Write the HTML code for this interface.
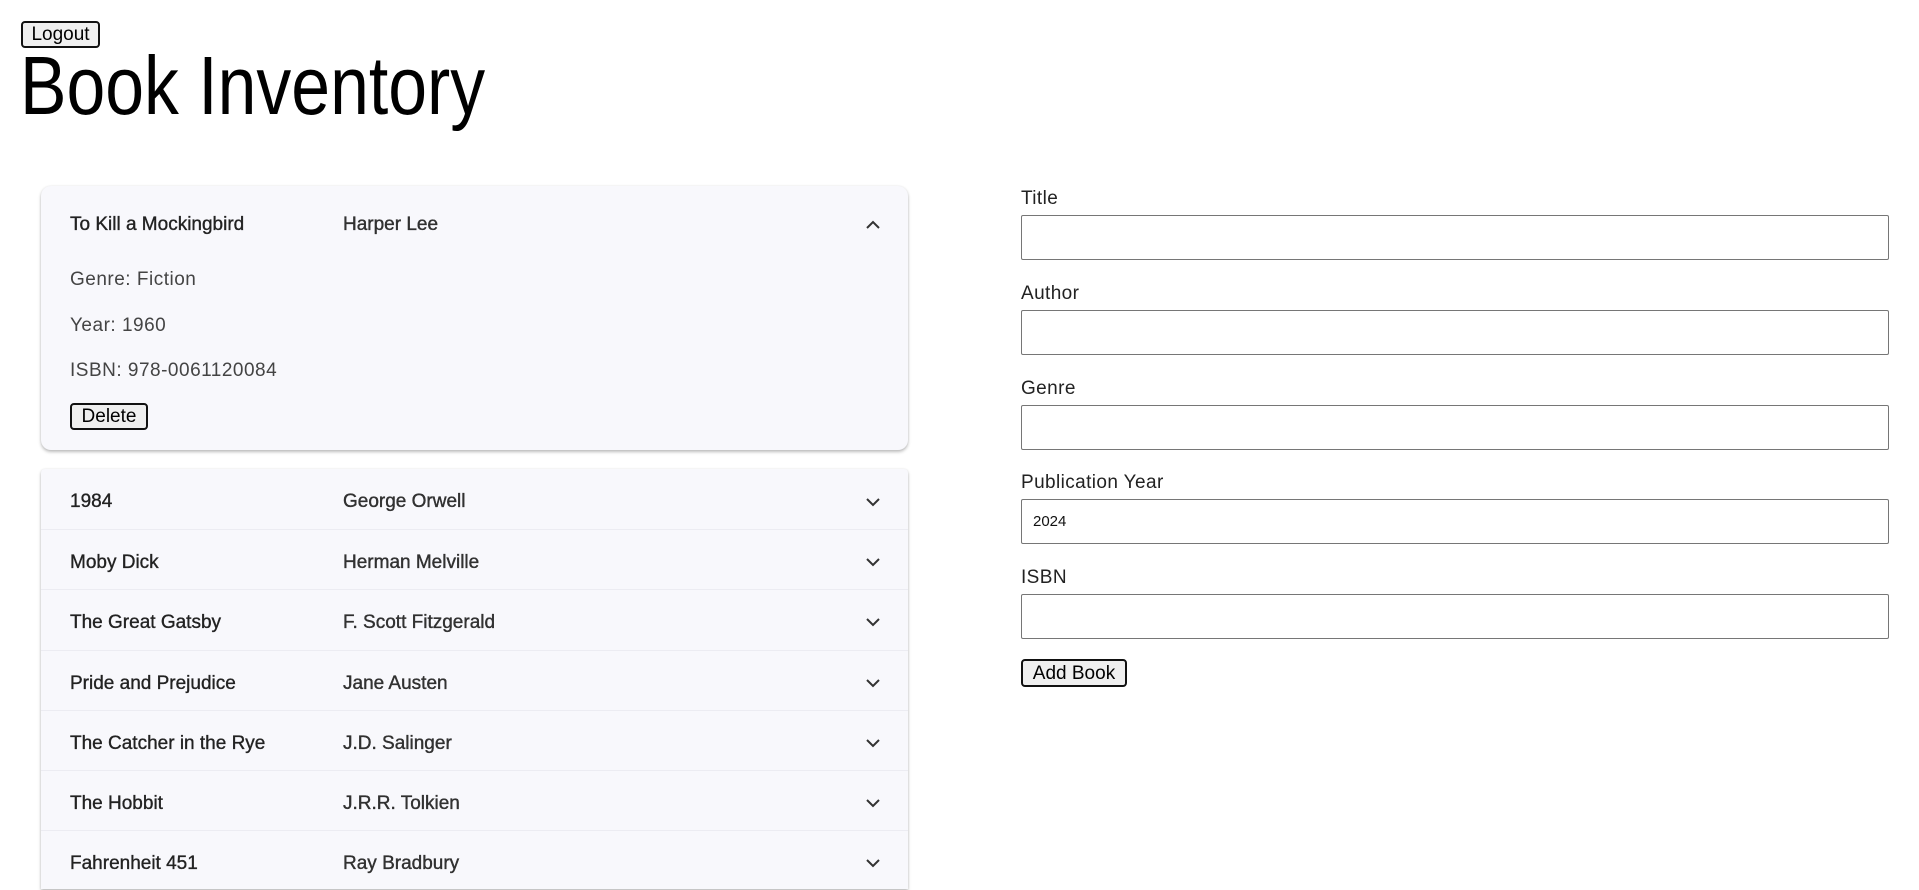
<!DOCTYPE html>
<html><head><meta charset="utf-8"><style>
body{margin:0;width:1919px;height:866px;overflow:hidden;background:#fff;font-family:"Liberation Sans",sans-serif;position:relative;color:#1f1f1f}
.btn{position:absolute;border:2px solid #111;border-radius:4px;background:#efefef;font-size:19px;line-height:1;display:flex;align-items:center;justify-content:center;box-sizing:border-box;color:#000}
h1{position:absolute;left:20px;top:44px;margin:0;font-weight:400;font-size:83px;line-height:1;transform:scaleX(.84);transform-origin:left;color:#000}
.card{position:absolute;left:41px;width:867px;background:#f8f8fc;box-shadow:0 2px 3px rgba(0,0,0,.25),0 0 2px rgba(0,0,0,.08);}
.t{position:absolute;font-size:19px;color:#222;transform:translateY(-50%);white-space:nowrap;-webkit-text-stroke:0.35px #222}
.d{position:absolute;font-size:19px;color:#444;transform:translateY(-50%);letter-spacing:.5px;white-space:nowrap}
.row{position:absolute;left:0;width:867px;height:60px;border-top:1px solid #ececf2;box-sizing:border-box}
.lbl{position:absolute;left:1021px;font-size:19px;color:#222;transform:translateY(-50%);letter-spacing:.4px}
.in{position:absolute;left:1021px;width:868px;height:45px;border:1px solid #767676;border-radius:2px;box-sizing:border-box;font-size:15px;padding-left:11px;line-height:43px;color:#111}
svg.ch{position:absolute;left:863px;width:20px;height:20px;transform:translateY(-50%)}
</style></head><body>
<div class="btn" style="left:21px;top:21px;width:79px;height:27px">Logout</div>
<h1>Book Inventory</h1>

<div class="card" style="top:186px;height:264px;border-radius:10px">
  <div class="t" style="left:29px;top:39px">To Kill a Mockingbird</div>
  <div class="t" style="left:302px;top:39px;color:#333">Harper Lee</div>
  <svg class="ch" style="left:822px;top:39px" viewBox="0 0 20 20"><polyline points="4,13 10,7 16,13" fill="none" stroke="#333" stroke-width="2"/></svg>
  <div class="d" style="left:29px;top:94px">Genre: Fiction</div>
  <div class="d" style="left:29px;top:140px">Year: 1960</div>
  <div class="d" style="left:29px;top:185px">ISBN: 978-0061120084</div>
  <div class="btn" style="left:29px;top:217px;width:78px;height:27px">Delete</div>
</div>

<div class="card" style="top:469px;height:420px;border-radius:4px 4px 0 0">
  <div class="row" style="top:0;border-top:none"><div class="t" style="left:29px;top:33px">1984</div><div class="t" style="left:302px;top:33px;color:#333">George Orwell</div></div>
  <div class="row" style="top:60px"><div class="t" style="left:29px;top:33px">Moby Dick</div><div class="t" style="left:302px;top:33px;color:#333">Herman Melville</div></div>
  <div class="row" style="top:120px"><div class="t" style="left:29px;top:33px">The Great Gatsby</div><div class="t" style="left:302px;top:33px;color:#333">F. Scott Fitzgerald</div></div>
  <div class="row" style="top:181px"><div class="t" style="left:29px;top:33px">Pride and Prejudice</div><div class="t" style="left:302px;top:33px;color:#333">Jane Austen</div></div>
  <div class="row" style="top:241px"><div class="t" style="left:29px;top:33px">The Catcher in the Rye</div><div class="t" style="left:302px;top:33px;color:#333">J.D. Salinger</div></div>
  <div class="row" style="top:301px"><div class="t" style="left:29px;top:33px">The Hobbit</div><div class="t" style="left:302px;top:33px;color:#333">J.R.R. Tolkien</div></div>
  <div class="row" style="top:361px"><div class="t" style="left:29px;top:33px">Fahrenheit 451</div><div class="t" style="left:302px;top:33px;color:#333">Ray Bradbury</div></div>
</div>
<svg class="ch" style="top:502px" viewBox="0 0 20 20"><polyline points="4,7 10,13 16,7" fill="none" stroke="#333" stroke-width="2"/></svg>
<svg class="ch" style="top:562px" viewBox="0 0 20 20"><polyline points="4,7 10,13 16,7" fill="none" stroke="#333" stroke-width="2"/></svg>
<svg class="ch" style="top:622px" viewBox="0 0 20 20"><polyline points="4,7 10,13 16,7" fill="none" stroke="#333" stroke-width="2"/></svg>
<svg class="ch" style="top:683px" viewBox="0 0 20 20"><polyline points="4,7 10,13 16,7" fill="none" stroke="#333" stroke-width="2"/></svg>
<svg class="ch" style="top:743px" viewBox="0 0 20 20"><polyline points="4,7 10,13 16,7" fill="none" stroke="#333" stroke-width="2"/></svg>
<svg class="ch" style="top:803px" viewBox="0 0 20 20"><polyline points="4,7 10,13 16,7" fill="none" stroke="#333" stroke-width="2"/></svg>
<svg class="ch" style="top:863px" viewBox="0 0 20 20"><polyline points="4,7 10,13 16,7" fill="none" stroke="#333" stroke-width="2"/></svg>

<div class="lbl" style="top:199px">Title</div><div class="in" style="top:215px"></div>
<div class="lbl" style="top:294px">Author</div><div class="in" style="top:310px"></div>
<div class="lbl" style="top:389px">Genre</div><div class="in" style="top:405px"></div>
<div class="lbl" style="top:483px">Publication Year</div><div class="in" style="top:499px">2024</div>
<div class="lbl" style="top:578px">ISBN</div><div class="in" style="top:594px"></div>
<div class="btn" style="left:1021px;top:659px;width:106px;height:28px">Add Book</div>
</body></html>
